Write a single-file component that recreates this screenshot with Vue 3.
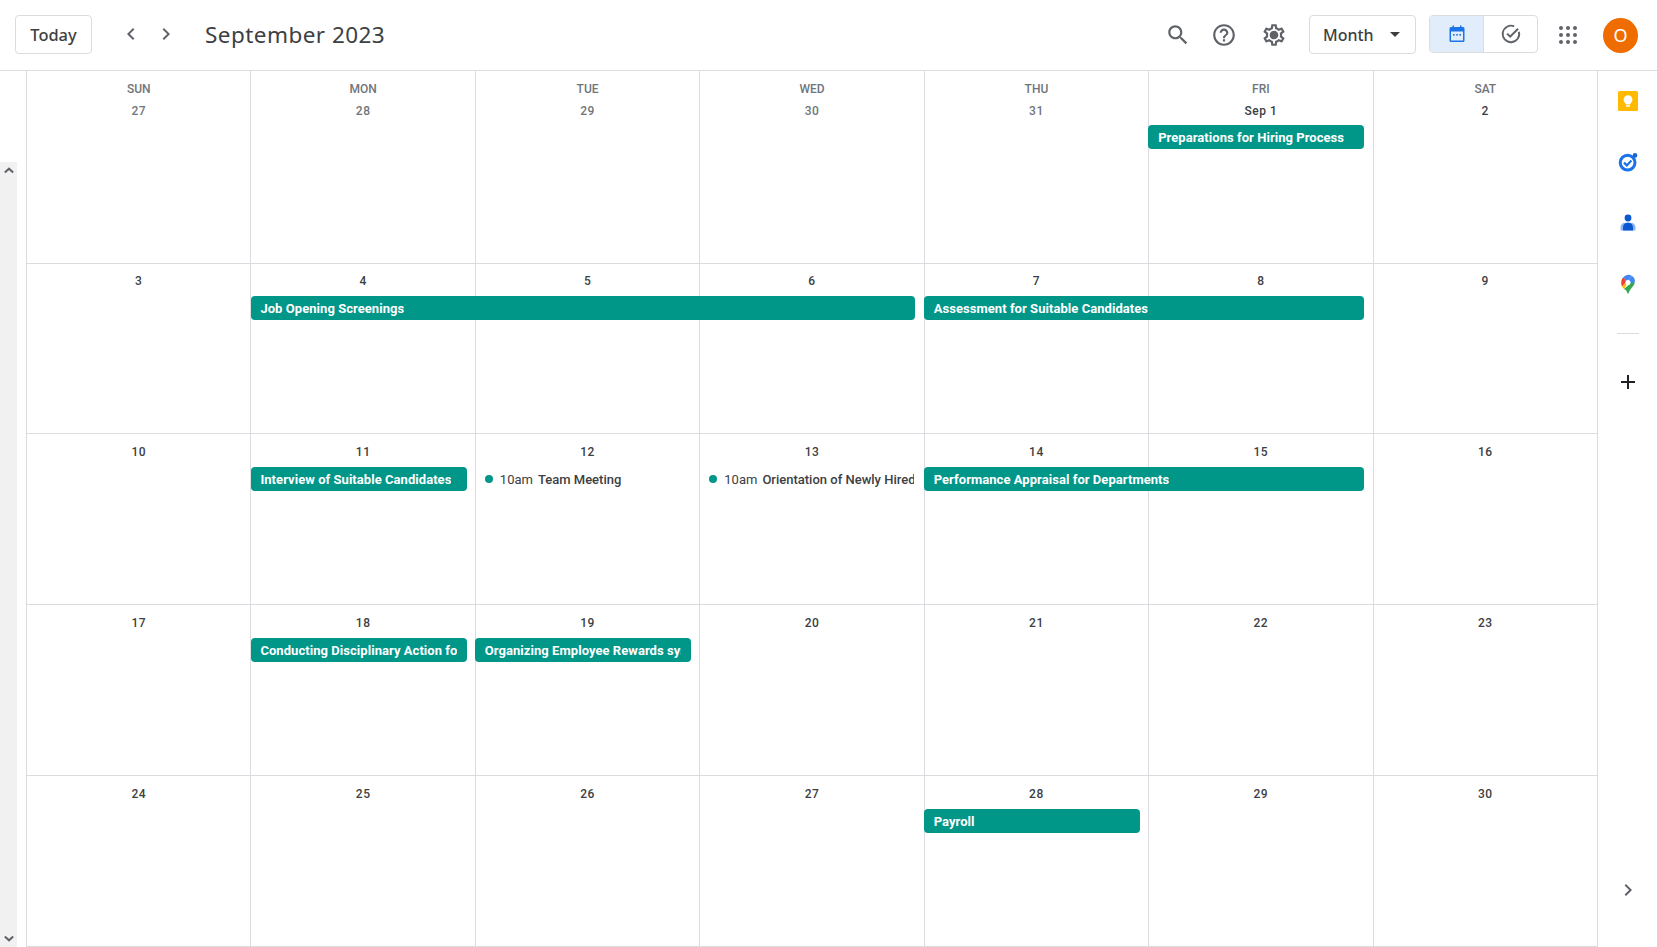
<script setup>
const dows = ['SUN', 'MON', 'TUE', 'WED', 'THU', 'FRI', 'SAT']
const weeks = [
  {
    days: [
      { n: '27', muted: true }, { n: '28', muted: true }, { n: '29', muted: true },
      { n: '30', muted: true }, { n: '31', muted: true }, { n: 'Sep 1' }, { n: '2' }
    ],
    events: [{ col: 6, span: 1, title: 'Preparations for Hiring Process' }]
  },
  {
    days: ['3', '4', '5', '6', '7', '8', '9'].map((n) => ({ n })),
    events: [
      { col: 2, span: 3, title: 'Job Opening Screenings' },
      { col: 5, span: 2, title: 'Assessment for Suitable Candidates' }
    ]
  },
  {
    days: ['10', '11', '12', '13', '14', '15', '16'].map((n) => ({ n })),
    events: [
      { col: 2, span: 1, title: 'Interview of Suitable Candidates' },
      { col: 3, span: 1, time: '10am', title: 'Team Meeting' },
      { col: 4, span: 1, time: '10am', title: 'Orientation of Newly Hired Employees' },
      { col: 5, span: 2, title: 'Performance Appraisal for Departments' }
    ]
  },
  {
    days: ['17', '18', '19', '20', '21', '22', '23'].map((n) => ({ n })),
    events: [
      { col: 2, span: 1, title: 'Conducting Disciplinary Action for Employees' },
      { col: 3, span: 1, title: 'Organizing Employee Rewards system' }
    ]
  },
  {
    days: ['24', '25', '26', '27', '28', '29', '30'].map((n) => ({ n })),
    events: [{ col: 5, span: 1, title: 'Payroll' }]
  }
]
const gridDots = [5, 12, 19].flatMap((y) => [5, 12, 19].map((x) => ({ x, y })))
</script>

<template>
  <div class="app">
    <header class="topbar">
      <button class="today">Today</button>
      <div class="nav">
        <svg viewBox="0 0 24 24" width="24" height="24"><path d="M15.4 7.4 14 6l-6 6 6 6 1.4-1.4-4.6-4.6z" fill="#5f6368" /></svg>
        <svg viewBox="0 0 24 24" width="24" height="24"><path d="M8.6 16.6 10 18l6-6-6-6-1.4 1.4 4.6 4.6z" fill="#5f6368" /></svg>
      </div>
      <h1 class="title">September 2023</h1>

      <div class="actions">
        <svg viewBox="0 0 24 24" width="26" height="26"><path fill="#5f6368" d="M15.5 14h-.79l-.28-.27C15.41 12.59 16 11.11 16 9.5 16 5.91 13.09 3 9.5 3S3 5.91 3 9.5 5.91 16 9.5 16c1.61 0 3.09-.59 4.23-1.57l.27.28v.79l5 4.99L20.49 19l-4.99-5zm-6 0C7.01 14 5 11.99 5 9.5S7.01 5 9.5 5 14 7.01 14 9.5 11.99 14 9.5 14z" /></svg>
        <svg viewBox="0 0 24 24" width="26" height="26"><path fill="#5f6368" d="M11 18h2v-2h-2v2zm1-16C6.48 2 2 6.48 2 12s4.48 10 10 10 10-4.48 10-10S17.52 2 12 2zm0 18c-4.41 0-8-3.59-8-8s3.59-8 8-8 8 3.59 8 8-3.59 8-8 8zm0-14c-2.21 0-4 1.79-4 4h2c0-1.1.9-2 2-2s2 .9 2 2c0 2-3 1.75-3 5h2c0-2.25 3-2.5 3-5 0-2.21-1.79-4-4-4z" /></svg>
        <svg class="gear" viewBox="0 0 24 24" width="26" height="26"><path fill="#5f6368" d="M19.43 12.98c.04-.32.07-.64.07-.98 0-.34-.03-.66-.07-.98l2.11-1.65c.19-.15.24-.42.12-.64l-2-3.46c-.09-.16-.26-.25-.44-.25-.06 0-.12.01-.17.03l-2.49 1c-.52-.4-1.08-.73-1.69-.98l-.38-2.65C14.46 2.18 14.25 2 14 2h-4c-.25 0-.46.18-.49.42l-.38 2.65c-.61.25-1.17.59-1.69.98l-2.49-1c-.06-.02-.12-.03-.18-.03-.17 0-.34.09-.43.25l-2 3.46c-.13.22-.07.49.12.64l2.11 1.65c-.04.32-.07.65-.07.98 0 .33.03.66.07.98l-2.11 1.65c-.19.15-.24.42-.12.64l2 3.46c.09.16.26.25.44.25.06 0 .12-.01.17-.03l2.49-1c.52.4 1.08.73 1.69.98l.38 2.65c.03.24.24.42.49.42h4c.25 0 .46-.18.49-.42l.38-2.65c.61-.25 1.17-.59 1.69-.98l2.49 1c.06.02.12.03.18.03.17 0 .34-.09.43-.25l2-3.46c.12-.22.07-.49-.12-.64l-2.11-1.65zm-1.98-1.71c.04.31.05.52.05.73 0 .21-.02.43-.05.73l-.14 1.13.89.7 1.08.84-.7 1.21-1.27-.51-1.04-.42-.9.68c-.43.32-.84.56-1.25.73l-1.06.43-.16 1.13-.2 1.35h-1.4l-.19-1.35-.16-1.13-1.06-.43c-.43-.18-.83-.41-1.23-.71l-.91-.7-1.06.43-1.27.51-.7-1.21 1.08-.84.89-.7-.14-1.13c-.03-.31-.05-.54-.05-.74s.02-.43.05-.73l.14-1.13-.89-.7-1.08-.84.7-1.21 1.27.51 1.04.42.9-.68c.43-.32.84-.56 1.25-.73l1.06-.43.16-1.13.2-1.35h1.39l.19 1.35.16 1.13 1.06.43c.43.18.83.41 1.23.71l.91.7 1.06-.43 1.27-.51.7 1.21-1.07.85-.89.7.14 1.13zM12 8c-2.21 0-4 1.79-4 4s1.79 4 4 4 4-1.79 4-4-1.79-4-4-4z" /></svg>
      </div>

      <button class="view">
        <span>Month</span>
        <svg viewBox="0 0 10 5" width="10" height="5"><path d="M0 0l5 5 5-5z" fill="#3c4043" /></svg>
      </button>

      <div class="toggle">
        <div class="seg active">
          <svg viewBox="0 0 18 18" width="18" height="18">
            <path fill="#1a73e8" d="M3 2h1.5V.5H6V2h6V.5h1.5V2H15a1.5 1.5 0 0 1 1.5 1.5v12A1.5 1.5 0 0 1 15 17H3a1.5 1.5 0 0 1-1.5-1.5v-12A1.5 1.5 0 0 1 3 2zm0 4.5v9h12v-9z" />
            <rect x="5" y="9" width="1.6" height="1.6" fill="#1a73e8" />
            <rect x="8.2" y="9" width="1.6" height="1.6" fill="#1a73e8" />
            <rect x="11.4" y="9" width="1.6" height="1.6" fill="#1a73e8" />
          </svg>
        </div>
        <div class="seg">
          <svg viewBox="0 0 24 24" width="22" height="22">
            <path fill="none" stroke="#5f6368" stroke-width="2" d="M20.6 9.5A9 9 0 1 1 15.5 3.7" />
            <path fill="none" stroke="#5f6368" stroke-width="2.2" d="M7.8 11.6l3.3 3.3 8.6-8.6" />
          </svg>
        </div>
      </div>

      <svg class="apps" viewBox="0 0 24 24" width="24" height="24">
        <circle v-for="d in gridDots" :key="d.x + '-' + d.y" :cx="d.x" :cy="d.y" r="2" fill="#5f6368" />
      </svg>
      <div class="avatar">O</div>
    </header>

    <main class="body">
      <div class="gutter">
        <div class="scroll">
          <svg viewBox="0 0 12 8" width="10" height="7"><path d="M1 6.5 6 1.8l5 4.7" fill="none" stroke="#5f6368" stroke-width="2.4" /></svg>
          <svg viewBox="0 0 12 8" width="10" height="7"><path d="M1 1.5 6 6.2l5-4.7" fill="none" stroke="#5f6368" stroke-width="2.4" /></svg>
        </div>
      </div>

      <div class="calendar">
        <section v-for="(week, w) in weeks" :key="w" class="week">
          <div v-for="(day, d) in week.days" :key="'c' + d" class="cell" :style="{ gridColumn: d + 1 }"></div>
          <div v-for="(day, d) in week.days" :key="'h' + d" class="head" :class="{ first: w === 0 }" :style="{ gridColumn: d + 1 }">
            <div v-if="w === 0" class="dow">{{ dows[d] }}</div>
            <div class="num" :class="{ muted: day.muted }">{{ day.n }}</div>
          </div>
          <div
            v-for="ev in week.events"
            :key="ev.title"
            :class="ev.time ? 'timed' : 'pill'"
            :style="{ gridColumn: ev.col + ' / span ' + ev.span }"
          >
            <template v-if="ev.time">
              <i class="dot"></i><span class="time">{{ ev.time }}</span><span class="clip">{{ ev.title }}</span>
            </template>
            <span v-else class="clip">{{ ev.title }}</span>
          </div>
        </section>
      </div>

      <aside class="side">
        <svg class="side-ico" viewBox="0 0 20 20" width="20" height="20">
          <rect width="20" height="20" rx="1.5" fill="#ffba00" />
          <circle cx="10" cy="8.6" r="4.4" fill="#fff" />
          <rect x="7.6" y="11" width="4.8" height="2.4" fill="#fff" />
          <rect x="8" y="14.2" width="4" height="1.5" fill="#fff" />
        </svg>
        <svg class="side-ico" viewBox="0 0 20 20" width="20" height="20">
          <circle cx="9.6" cy="10.6" r="7.4" fill="none" stroke="#1a73e8" stroke-width="3" />
          <path d="M6 10.6l2.8 2.8 4.6-4.8" fill="none" stroke="#1a73e8" stroke-width="2.2" />
          <circle cx="17" cy="3.4" r="2.3" fill="#1967d2" />
        </svg>
        <svg class="side-ico" viewBox="0 0 20 20" width="20" height="20">
          <circle cx="10" cy="5" r="3.4" fill="#0b57d0" />
          <path d="M2.5 17.5v-3A4.8 4.8 0 0 1 7.3 9.7h5.4a4.8 4.8 0 0 1 4.8 4.8v3z" fill="#8ab4f8" />
          <path d="M5 17.5v-3.3A4.5 4.5 0 0 1 9.5 9.7h1a4.5 4.5 0 0 1 4.5 4.5v3.3z" fill="#0b57d0" />
        </svg>
        <svg class="side-ico" viewBox="0 0 20 20" width="20" height="20">
          <path d="M5.3 3.2A6.5 6.5 0 0 1 14 2l-4 4.2a2.6 2.6 0 0 0-1.9 1z" fill="#4285f4" />
          <path d="M5.3 3.2 8.1 7.2a2.8 2.8 0 0 0-.4 1.5L4 12.5C3.5 11.5 3.2 9.8 3.2 8.5c0-2 .8-4 2.1-5.3z" fill="#ea4335" />
          <path d="M4 12.5l3.7-3.8a2.5 2.5 0 0 0 1 1.8L6 15c-.8-.9-1.5-1.7-2-2.5z" fill="#fbbc04" />
          <path d="M14 2a6.5 6.5 0 0 1 2.8 6.5L12 9.8a2.5 2.5 0 0 0-2-3.6z" fill="#4285f4" />
          <path d="M16.8 8.5c-.5 3-3.6 5.5-5.3 8.5-.5.9-1.2 3-1.5 3-.3 0-1-2.5-2-3.8L6 15l6-5.2a2.6 2.6 0 0 0 .2-1.3z" fill="#34a853" />
          <circle cx="10" cy="8.5" r="2.5" fill="#fff" />
        </svg>
        <div class="rule"></div>
        <svg class="plus" viewBox="0 0 24 24" width="24" height="24"><path d="M19 13h-6v6h-2v-6H5v-2h6V5h2v6h6z" fill="#202124" /></svg>
        <svg class="expand" viewBox="0 0 24 24" width="24" height="24"><path d="M8.6 16.6 10 18l6-6-6-6-1.4 1.4 4.6 4.6z" fill="#5f6368" /></svg>
      </aside>
    </main>
  </div>
</template>

<style>
html, body { margin: 0; overflow: hidden; background: #fff; }
</style>

<style scoped>
.app {
  width: 1657px;
  height: 947px;
  display: flex;
  flex-direction: column;
  font-family: Roboto, "Liberation Sans", sans-serif;
  color: #3c4043;
  background: #fff;
  overflow: hidden;
}
.topbar {
  height: 70px;
  flex: none;
  border-bottom: 1px solid #dadce0;
  display: flex;
  align-items: center;
  padding-left: 15px;
}
.today {
  width: 77px;
  height: 39px;
  margin-top: -1px;
  background: #fff;
  border: 1px solid #dadce0;
  border-radius: 4px;
  font: 500 16.4px "Noto Sans", sans-serif;
  color: #3c4043;
  padding: 0;
}
.nav {
  display: flex;
  gap: 11px;
  margin-left: 27px;
  margin-top: -3px;
}
.title {
  margin: -1px 0 0 27px;
  font: 400 22.5px "Noto Sans", sans-serif;
  letter-spacing: 0.45px;
  color: #3c4043;
}
.actions {
  margin-left: auto;
  display: flex;
  gap: 20px;
  margin-right: 22px;
  margin-top: -1px;
}
.gear {
  margin-left: 4px;
}
.view {
  width: 107px;
  height: 39px;
  margin-top: -1px;
  box-sizing: border-box;
  display: flex;
  align-items: center;
  justify-content: space-between;
  padding: 0 15px 0 13px;
  background: #fff;
  border: 1px solid #dadce0;
  border-radius: 4px;
  font: 500 16px "Noto Sans", sans-serif;
  color: #3c4043;
}
.toggle {
  margin-left: 13px;
  margin-top: -3px;
  width: 109px;
  height: 38px;
  box-sizing: border-box;
  display: flex;
  border: 1px solid #dadce0;
  border-radius: 4px;
  overflow: hidden;
}
.seg {
  flex: 1;
  display: flex;
  align-items: center;
  justify-content: center;
}
.seg.active {
  background: #e1edfb;
  border-right: 1px solid #dadce0;
}
.apps {
  margin-left: 18px;
}
.avatar {
  width: 35px;
  height: 35px;
  margin-left: 23px;
  margin-right: 19px;
  border-radius: 50%;
  background: #ef6c00;
  color: #fff;
  font: 400 18px "Noto Sans", sans-serif;
  display: flex;
  align-items: center;
  justify-content: center;
}
.body {
  flex: 1;
  min-height: 0;
  display: flex;
}
.gutter {
  width: 27px;
  flex: none;
  border-right: 1px solid #dadce0;
  box-sizing: border-box;
  padding-top: 91px;
}
.scroll {
  width: 17px;
  height: 100%;
  background: #f1f1f1;
  display: flex;
  flex-direction: column;
  align-items: center;
  justify-content: space-between;
  padding: 5px 0;
  box-sizing: border-box;
}
.calendar {
  flex: 1;
  min-width: 0;
  display: grid;
  grid-template-rows: 193px 170px 171px 171px minmax(0, 1fr);
}
.week {
  display: grid;
  grid-template-columns: repeat(7, minmax(0, 1fr));
  grid-template-rows: auto 24px 1fr;
  border-bottom: 1px solid #dadce0;
  min-height: 0;
}
.cell {
  grid-row: 1 / -1;
  border-right: 1px solid #dadce0;
}
.head {
  grid-row: 1;
  padding: 10px 1px 7px 0;
  text-align: center;
}
.week:nth-child(2) .head {
  padding: 9px 1px 7px 0;
}
.head.first {
  padding: 12px 1px 6px 0;
}
.dow {
  font-size: 12px;
  line-height: 12px;
  font-weight: 500;
  color: #70757a;
  margin-bottom: 8px;
}
.num {
  font-size: 12px;
  line-height: 16px;
  font-weight: 500;
  color: #3c4043;
  letter-spacing: 0.5px;
}
.num.muted {
  color: #70757a;
}
.pill,
.timed {
  grid-row: 2;
  min-width: 0;
}
.pill {
  margin: 0 9.3px 0 -0.8px;
  background: #009688;
  color: #fff;
  border-radius: 4px;
  box-sizing: border-box;
  height: 24px;
  padding: 1px 10px 0 9.8px;
  font-size: 13px;
  line-height: 24px;
  font-weight: 700;
  letter-spacing: 0.05px;
  display: flex;
  overflow: hidden;
}
.timed {
  margin-right: 11px;
  padding: 1px 0 0 9px;
  box-sizing: border-box;
  display: flex;
  align-items: center;
  height: 24px;
  font-size: 13px;
  line-height: 24px;
  font-weight: 500;
  color: #3c4043;
}
.dot {
  width: 8px;
  height: 8px;
  border-radius: 50%;
  background: #009688;
  flex: none;
  margin: -1px 7px 0 0;
}
.time {
  font-weight: 400;
  margin-right: 5px;
  flex: none;
}
.clip {
  overflow: hidden;
  white-space: nowrap;
  min-width: 0;
}
.side {
  width: 59px;
  flex: none;
  box-sizing: border-box;
  padding: 20px 0 0 1px;
  display: flex;
  flex-direction: column;
  align-items: center;
}
.side-ico {
  flex: none;
  margin-bottom: 41px;
}
.rule {
  width: 22px;
  height: 1px;
  background: #dadce0;
  flex: none;
  margin-top: -2px;
}
.plus {
  flex: none;
  margin-top: 36px;
}
.expand {
  flex: none;
  margin-top: auto;
  margin-bottom: 45px;
}
</style>
